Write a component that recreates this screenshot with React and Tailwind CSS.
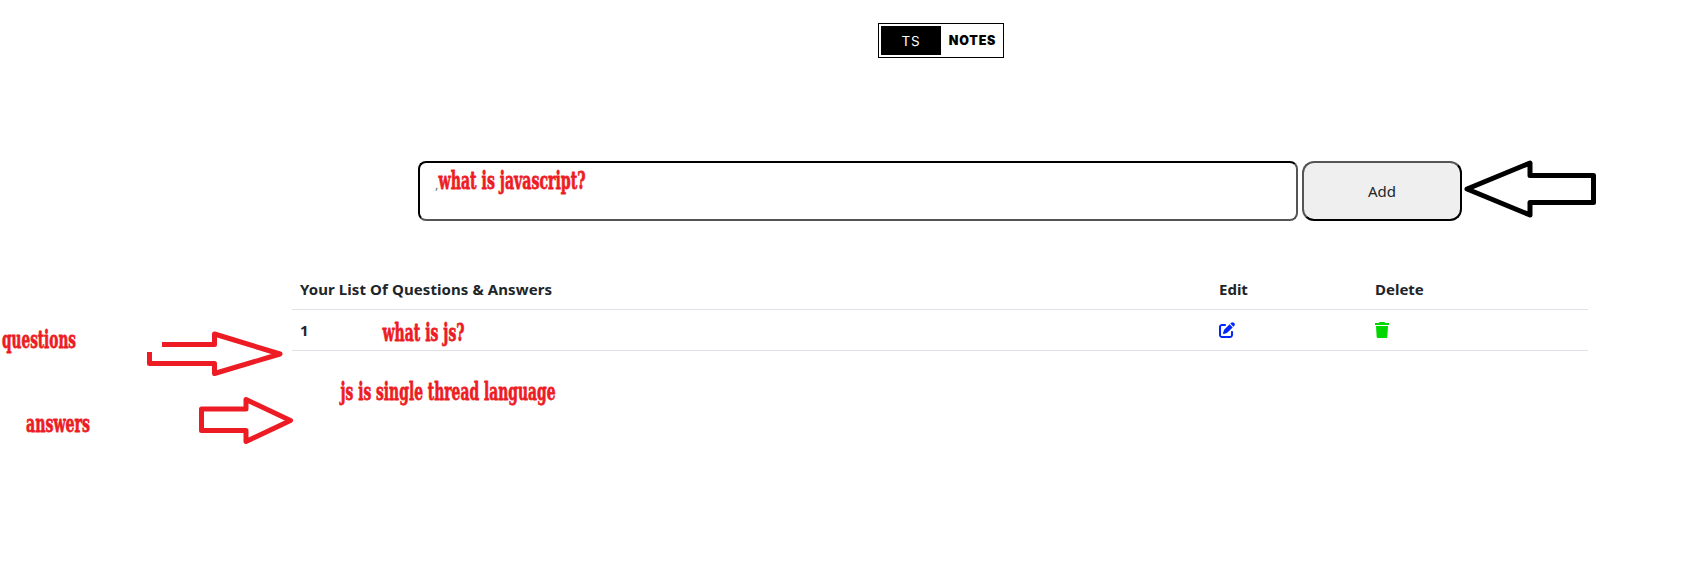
import React from "react";
import { FaPenToSquare } from "react-icons/fa6";

function Note({ x, y, width, children }) {
  return (
    <text x={x} y={y} textLength={width} lengthAdjust="spacingAndGlyphs">
      {children}
    </text>
  );
}

function Annotations() {
  return (
    <svg
      className="pointer-events-none absolute top-0 left-0"
      width="1707"
      height="563"
      viewBox="0 0 1707 563"
      fill="none"
      strokeWidth="5"
      strokeLinejoin="round"
    >
      <path d="M1467 189 1530 163V175.500H1593.500V202.500H1530V215Z" stroke="#000" />
      <path d="M162 344.500H214.500V334L280 354 214.500 373.500V363.500H149.500V352" stroke="#ed1c24" />
      <path d="M201.500 409H246V399.500L290.500 420.500 246 441.500V430.500H201.500Z" stroke="#ed1c24" />
      <g
        className="font-['DejaVu_Serif','Liberation_Serif',serif] text-[23.5px] font-bold"
        fill="#ed1c24"
        stroke="#ed1c24"
        strokeWidth="0.8"
      >
        <Note x={438.5} y={188.5} width={147}>what is javascript?</Note>
        <Note x={382.5} y={340.5} width={82}>what is js?</Note>
        <Note x={340.5} y={399.5} width={215}>js is single thread language</Note>
        <Note x={2} y={347.5} width={74}>questions</Note>
        <Note x={26} y={431.5} width={64}>answers</Note>
      </g>
    </svg>
  );
}

function TrashIcon() {
  return (
    <svg className="h-4 w-[14px] text-[#00d600]" viewBox="0 0 14 16" fill="currentColor">
      <path d="M4.500 0h5l.6 1H14v2H0V1h3.900ZM1 4h12l-.7 11.200a1 1 0 0 1-1 .8H2.700a1 1 0 0 1-1-.8Z" />
    </svg>
  );
}

function Logo() {
  return (
    <div className="ml-[878px] flex h-[35px] w-[126px] border border-black bg-white p-0.5">
      <div className="flex w-[60px] items-center justify-center bg-black pt-px font-['Inter',sans-serif] text-[13.5px] tracking-[0.8px] text-white">
        TS
      </div>
      <div className="flex flex-1 items-center justify-center pt-0.5 pl-[3px] font-['Inter',sans-serif] text-[12.5px] font-black tracking-[0.8px] text-black">
        NOTES
      </div>
    </div>
  );
}

export default function App() {
  return (
    <main className="relative h-[563px] w-[1707px] overflow-hidden bg-white pt-[23px] font-['Noto_Sans','Open_Sans',sans-serif] text-base text-[#212529]">
      <Logo />
      <form className="mt-[103px] ml-[418px] flex gap-1" onSubmit={(e) => e.preventDefault()}>
        <div className="h-[60px] w-[880px] rounded-lg border-2 border-t-black border-r-[#555] border-b-[#555] border-l-black pt-3 pl-[15px] text-[13px] text-[#777]">
          ,
        </div>
        <button className="h-[60px] w-40 rounded-xl border-2 border-t-[#555] border-r-black border-b-black border-l-[#555] bg-[#efefef] text-[15px] text-[#212529]">
          Add
        </button>
      </form>
      <table className="mt-[47px] ml-[292px] w-[1296px] table-fixed border-collapse text-left text-[15px] leading-6">
        <colgroup>
          <col className="w-[919px]" />
          <col className="w-[156px]" />
          <col className="w-[221px]" />
        </colgroup>
        <thead>
          <tr className="h-[41px] border-b border-[#dee2e6]">
            <th className="px-2 pt-0.5 tracking-[0.09px]">Your List Of Questions &amp; Answers</th>
            <th className="px-2 pt-0.5">Edit</th>
            <th className="px-2 pt-0.5">Delete</th>
          </tr>
        </thead>
        <tbody>
          <tr className="h-[41px] border-b border-[#dee2e6]">
            <th className="px-2">1</th>
            <td className="px-2">
              <FaPenToSquare className="size-4 text-[#0026ff]" />
            </td>
            <td className="px-2">
              <TrashIcon />
            </td>
          </tr>
        </tbody>
      </table>
      <Annotations />
    </main>
  );
}
